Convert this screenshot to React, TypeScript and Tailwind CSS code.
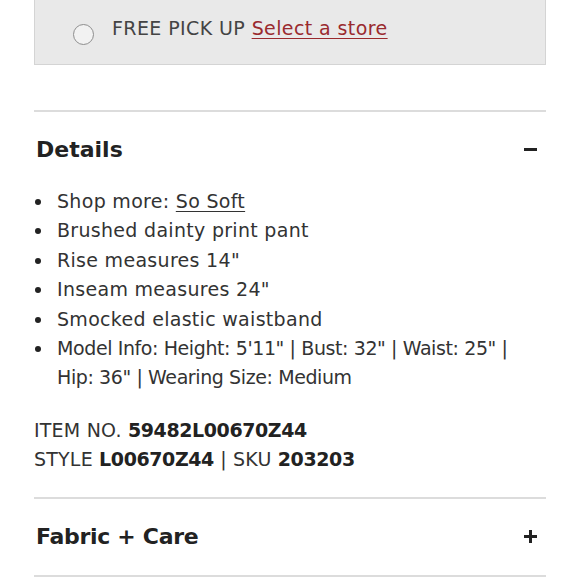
import React from "react";

const items: React.ReactNode[] = [
  <>Shop more: <span className="underline underline-offset-[3px]">So Soft</span></>,
  <>Brushed dainty print pant</>,
  <>Rise measures 14"</>,
  <>Inseam measures 24"</>,
  <>Smocked elastic waistband</>,
  <span className="tracking-[-0.4px]">Model Info: Height: 5'11" | Bust: 32" | Waist: 25" |<br />Hip: 36" | Wearing Size: Medium</span>,
];

export default function App() {
  return (
    <div
      className="w-[580px] h-[580px] overflow-hidden bg-white text-[#2b2b2b]"
      style={{ fontFamily: '"DejaVu Sans", sans-serif' }}
    >
      <div className="px-[34px]">
        <div className="h-[65px] bg-[#e9e9e9] border border-t-0 border-[#d4d4d4] flex items-center pl-[38px]">
          <div className="w-[21px] h-[21px] mt-[4px] rounded-full border border-[#8e8e8e] bg-[#f2f2f2]" />
          <div className="ml-[18px] mb-[8px] text-[19px] text-[#444] tracking-[0.4px]">
            FREE PICK UP{" "}
            <span className="text-[#9a2a2e] underline underline-offset-[3px]">Select a store</span>
          </div>
        </div>

        <div className="mt-[45px] border-t-2 border-[#dcdcdc]" />
        <div className="h-[75px] flex items-center justify-between pl-[2px] pr-[9px]">
          <div className="text-[22px] font-bold text-[#222]">Details</div>
          <div className="w-[13px] h-[3px] bg-[#222]" />
        </div>

        <ul className="text-[19px] leading-[29.4px] text-[#333] tracking-[0.3px]">
          {items.map((it, i) => (
            <li key={i} className="flex">
              <span className="w-[23px] shrink-0 flex justify-start pt-[12px] pl-[1px]">
                <span className="block w-[6px] h-[6px] rounded-full bg-[#222]" />
              </span>
              <span className="whitespace-nowrap">{it}</span>
            </li>
          ))}
        </ul>

        <div className="mt-[23px] text-[19px] leading-[29.4px] text-[#333] tracking-[0.2px]">
          <div>
            ITEM NO. <span className="font-bold text-[#222] tracking-[-0.4px]">59482L00670Z44</span>
          </div>
          <div>
            STYLE <span className="font-bold text-[#222] tracking-[-0.4px]">L00670Z44</span> | SKU{" "}
            <span className="font-bold text-[#222] tracking-[-0.4px]">203203</span>
          </div>
        </div>

        <div className="mt-[22px] border-t-2 border-[#dcdcdc]" />
        <div className="h-[76px] flex items-center justify-between pl-[2px] pr-[9px]">
          <div className="text-[22px] font-bold text-[#222] tracking-[-0.3px]">Fabric + Care</div>
          <div className="relative w-[13px] h-[13px]">
            <div className="absolute left-0 top-[5px] w-[13px] h-[3px] bg-[#222]" />
            <div className="absolute top-0 left-[5px] w-[3px] h-[13px] bg-[#222]" />
          </div>
        </div>
        <div className="border-t-2 border-[#dcdcdc]" />
      </div>
    </div>
  );
}
